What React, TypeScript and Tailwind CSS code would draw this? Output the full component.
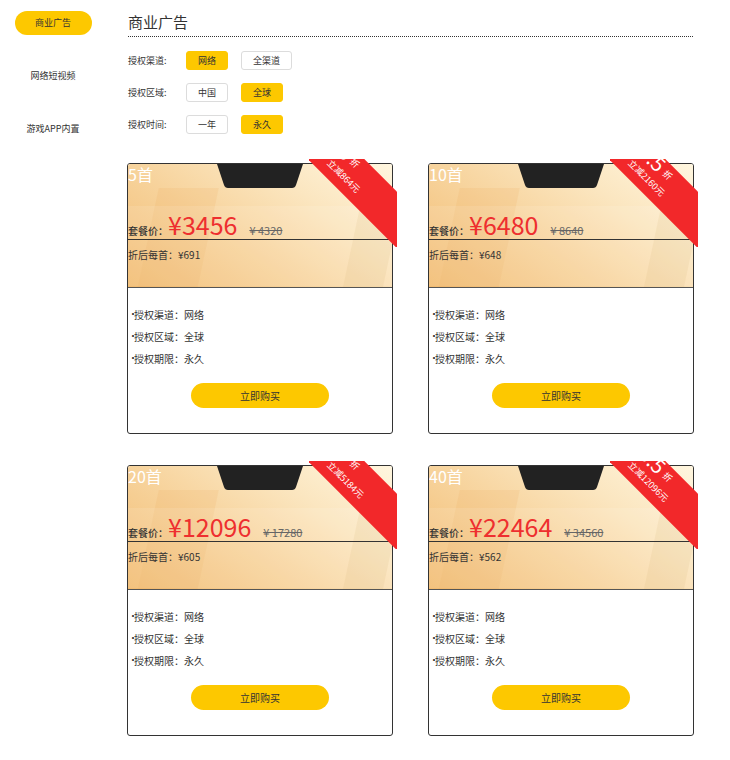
import React from "react";

type Pkg = {
  count: string;
  price: string;
  orig: string;
  per: string;
  disc: string;
  save: string;
};

const pkgs: Pkg[] = [
  { count: "5首", price: "¥3456", orig: "¥ 4320", per: "¥691", disc: "8", save: "立减864元" },
  { count: "10首", price: "¥6480", orig: "¥ 8640", per: "¥648", disc: "7.5", save: "立减2160元" },
  { count: "20首", price: "¥12096", orig: "¥ 17280", per: "¥605", disc: "7", save: "立减5184元" },
  { count: "40首", price: "¥22464", orig: "¥ 34560", per: "¥562", disc: "6.5", save: "立减12096元" },
];

function Ribbon({ disc, save }: { disc: string; save: string }) {
  return (
    <div className="absolute -top-[5px] -right-[5px] w-[88px] h-[88px] overflow-hidden pointer-events-none">
      <div className="absolute left-[82px] top-[82px] w-[6px] h-[6px] bg-[#9e1212] [clip-path:polygon(0_0,100%_0,100%_100%)]" />
      <div className="absolute left-[-47px] top-[-4px] w-[180px] h-[40px] rotate-45 bg-[#f2282a] flex flex-col items-start pl-[64px] text-white">
        <div className="h-[16px] leading-[16px] flex items-end whitespace-nowrap">
          <span className="text-[20px] leading-[16px]">{disc}</span>
          <span className="text-[9px] leading-[12px] ml-[4px]">折</span>
        </div>
        <div className="mt-[3px] h-[16px] leading-[16px] text-[9px] whitespace-nowrap">{save}</div>
      </div>
    </div>
  );
}

function Card({ p }: { p: Pkg }) {
  return (
    <div className="relative border border-[#333] rounded-[3px] bg-white">
      <div className="relative h-[124px] overflow-hidden rounded-t-[2px] border-b border-[#555] bg-[linear-gradient(35deg,#f2bb70_0%,#f7d39c_40%,#fbe6c0_70%,#fff6df_100%)]">
        <div className="absolute left-[18px] top-[24px] w-[60px] h-[120px] -skew-x-[12deg] bg-[#e9a957]/15" />
        <div className="absolute left-0 right-0 top-[42px] h-[80px] bg-white/10" />
        <div className="absolute left-[222px] top-[40px] w-[40px] h-[100px] -skew-x-[12deg] bg-[#d9b27a]/15" />
        <svg
          className="absolute top-0 left-1/2 -translate-x-1/2"
          width="86"
          height="25"
          viewBox="0 0 86 25"
        >
          <path d="M0 0 H86 L79 21 Q78 24 75 24 H11 Q8 24 7 21 Z" fill="#222" />
        </svg>
        <div className="relative">
          <div className="h-[20px] leading-[20px] text-[16px] text-white">{p.count}</div>
          <div className="mt-[24px] h-[32px] flex items-baseline border-b border-[#333]">
            <span className="text-[10px] text-[#333] font-medium">套餐价：</span>
            <span className="text-[25px] leading-[32px] text-[#ee2f2f]">{p.price}</span>
            <span className="ml-[12px] text-[11px] text-[#666] line-through">{p.orig}</span>
          </div>
          <div className="h-[28px] flex items-center text-[10px] text-[#333]">折后每首：{p.per}</div>
        </div>
      </div>
      <div className="pt-[15px] pb-[25px]">
        {["授权渠道：网络", "授权区域：全球", "授权期限：永久"].map((t) => (
          <div key={t} className="h-[22px] flex items-center text-[10px] text-[#333]">
            <span className="w-[6px] text-[10px] leading-none">•</span>
            <span>{t}</span>
          </div>
        ))}
        <div className="mt-[14px] flex justify-center">
          <div className="w-[138px] h-[25px] rounded-full bg-[#fdc800] flex items-center justify-center text-[10px] text-[#333]">
            立即购买
          </div>
        </div>
      </div>
      <Ribbon disc={p.disc} save={p.save} />
    </div>
  );
}

function Opt({ label, active }: { label: string; active?: boolean }) {
  return (
    <div
      className={
        active
          ? "h-[19px] px-[11px] flex items-center rounded-[3px] bg-[#fdc800] border border-[#fdc800] text-[9px] text-[#333]"
          : "h-[19px] px-[11px] flex items-center rounded-[3px] bg-white border border-[#dcdcdc] text-[9px] text-[#333]"
      }
    >
      {label}
    </div>
  );
}

export default function App() {
  return (
    <div className="w-[730px] min-h-[760px] bg-white flex font-['Noto_Sans_CJK_SC','Noto_Sans',sans-serif] text-[#333]">
      <div className="w-[106px] shrink-0 pt-[11px] flex flex-col items-center gap-[29px]">
        <div className="w-[77px] h-[24px] rounded-full bg-[#fdc800] flex items-center justify-center text-[9px]">
          商业广告
        </div>
        <div className="h-[24px] flex items-center text-[9px]">网络短视频</div>
        <div className="h-[24px] flex items-center text-[9px]">游戏APP内置</div>
      </div>
      <div className="ml-[21px] w-[567px] pb-[22px]">
        <div className="pt-[12px] pb-[4px] ml-px mr-px border-b border-dotted border-[#333]">
          <div className="text-[15px] leading-[20px]">商业广告</div>
        </div>
        <div className="mt-[14px] flex flex-col gap-[13px] pl-px">
          <div className="flex items-center">
            <div className="w-[58px] text-[9px]">授权渠道:</div>
            <div className="flex gap-[13px]">
              <Opt label="网络" active />
              <Opt label="全渠道" />
            </div>
          </div>
          <div className="flex items-center">
            <div className="w-[58px] text-[9px]">授权区域:</div>
            <div className="flex gap-[13px]">
              <Opt label="中国" />
              <Opt label="全球" active />
            </div>
          </div>
          <div className="flex items-center">
            <div className="w-[58px] text-[9px]">授权时间:</div>
            <div className="flex gap-[13px]">
              <Opt label="一年" />
              <Opt label="永久" active />
            </div>
          </div>
        </div>
        <div className="mt-[29px] grid grid-cols-[266px_266px] gap-x-[35px] gap-y-[31px]">
          {pkgs.map((p) => (
            <Card key={p.count} p={p} />
          ))}
        </div>
      </div>
    </div>
  );
}
